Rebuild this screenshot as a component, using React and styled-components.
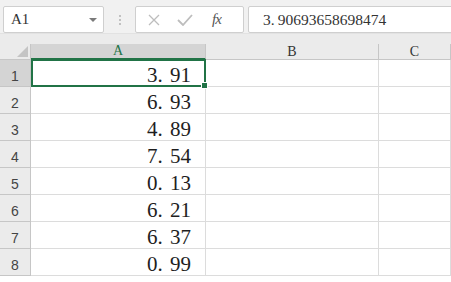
import styled, { createGlobalStyle, css } from "styled-components";

const GlobalStyle = createGlobalStyle`
  html, body {
    margin: 0;
    padding: 0;
    background: #ffffff;
    overflow: hidden;
  }
  * {
    box-sizing: border-box;
  }
`;

const SERIF = `"Liberation Serif", "Times New Roman", serif`;

const Page = styled.div`
  width: 451px;
  height: 282px;
  overflow: hidden;
  font-family: ${SERIF};
  color: #222222;
`;

const Toolbar = styled.div`
  height: 34px;
  padding: 6px 0 0 3px;
  background: #f1f1f1;
  display: flex;
  align-items: flex-start;
  border-bottom: 1px solid #e2e2e2;
`;

const Box = styled.div`
  height: 27px;
  background: #ffffff;
  border: 1px solid #cfcfcf;
  border-radius: 2px;
  display: flex;
  align-items: center;
`;

const NameBox = styled(Box)`
  width: 101px;
  padding: 0 6px 0 7px;
  justify-content: space-between;
  font-size: 15px;
  color: #333333;
`;

const DropArrow = styled.span`
  width: 0;
  height: 0;
  border-left: 4px solid transparent;
  border-right: 4px solid transparent;
  border-top: 4px solid #7a7a7a;
  margin-top: 1px;
`;

const Grip = styled.div`
  width: 31px;
  height: 27px;
  display: flex;
  flex-direction: column;
  align-items: center;
  justify-content: center;
  gap: 2px;
`;

const GripDot = styled.span`
  width: 2px;
  height: 2px;
  border-radius: 50%;
  background: #b0b0b0;
`;

const FuncBox = styled(Box)`
  width: 109px;
  padding: 0 0 0 12px;
  gap: 17px;
`;

const FxLabel = styled.span`
  font-family: ${SERIF};
  font-style: italic;
  font-size: 15px;
  color: #555555;
  letter-spacing: -1px;
  margin-left: 2px;
`;

const FormulaBox = styled(Box)`
  flex: 1;
  margin-left: 4px;
  margin-right: -4px;
  padding-left: 14px;
  font-size: 15.5px;
  color: #333333;
`;

const Strip = styled.div`
  height: 10px;
  background: #ebebeb;
`;

const Grid = styled.div`
  display: grid;
  grid-template-columns: 31px 175px 173px 1fr;
  grid-template-rows: 16px repeat(8, 27px);
`;

const Corner = styled.div`
  background: #ebebeb;
  border-right: 1px solid #c6c6c6;
  border-bottom: 1px solid #c6c6c6;
  display: flex;
  align-items: flex-end;
  justify-content: flex-end;
  padding: 0 2px 2px 0;
`;

const ColHeader = styled.div`
  background: ${(p) => (p.$active ? "#d4d4d4" : "#ebebeb")};
  border-right: 1px solid #c6c6c6;
  border-bottom: ${(p) => (p.$active ? "2px solid #217346" : "1px solid #c6c6c6")};
  color: ${(p) => (p.$active ? "#217346" : "#333333")};
  font-size: 14px;
  line-height: 14px;
  display: flex;
  align-items: center;
  justify-content: center;
`;

const RowHeader = styled.div`
  background: ${(p) => (p.$active ? "#d4d4d4" : "#ebebeb")};
  border-right: 1px solid #c6c6c6;
  border-bottom: 1px solid #c6c6c6;
  color: #444444;
  font-family: "Liberation Sans", Arial, sans-serif;
  font-size: 14px;
  line-height: 14px;
  display: flex;
  align-items: flex-end;
  justify-content: center;
  padding-bottom: 3px;
`;

const Cell = styled.div`
  position: relative;
  border-right: 1px solid #dcdcdc;
  border-bottom: 1px solid #dcdcdc;
  display: flex;
  align-items: flex-end;
  justify-content: flex-end;
  padding-right: 14px;
  font-size: 21px;
  line-height: 22px;
  color: #1e1e1e;
  ${(p) =>
    p.$selected &&
    css`
      &::after {
        content: "";
        position: absolute;
        top: -1px;
        left: 0;
        right: -1px;
        bottom: -1px;
        border: 2px solid #217346;
        pointer-events: none;
      }
    `}
`;

const FillHandle = styled.span`
  position: absolute;
  right: -3px;
  bottom: -3px;
  width: 5px;
  height: 5px;
  background: #217346;
  border: 1px solid #ffffff;
  box-sizing: content-box;
  z-index: 2;
`;

const Dot = styled.span`
  padding-right: ${(p) => p.$gap};
`;

const values = [3.91, 6.93, 4.89, 7.54, 0.13, 6.21, 6.37, 0.99];

function Num({ value, gap = "0.35em" }) {
  const [a, b] = String(value).split(".");
  return (
    <span>
      {a}
      <Dot $gap={gap}>.</Dot>
      {b}
    </span>
  );
}

function Row({ index, value }) {
  const selected = index === 0;
  return (
    <>
      <RowHeader $active={selected}>{index + 1}</RowHeader>
      <Cell $selected={selected}>
        <Num value={value} />
        {selected && <FillHandle />}
      </Cell>
      <Cell />
      <Cell />
    </>
  );
}

function Sheet() {
  return (
    <Grid>
      <Corner>
        <svg width="11" height="11" viewBox="0 0 11 11">
          <path d="M11 0 L11 11 L0 11 Z" fill="#c4c4c4" />
        </svg>
      </Corner>
      <ColHeader $active>A</ColHeader>
      <ColHeader>B</ColHeader>
      <ColHeader>C</ColHeader>
      {values.map((v, i) => (
        <Row key={i} index={i} value={v} />
      ))}
    </Grid>
  );
}

export default function App() {
  return (
    <>
      <GlobalStyle />
      <Page>
        <Toolbar>
          <NameBox>
            <span>A1</span>
            <DropArrow />
          </NameBox>
          <Grip>
            <GripDot />
            <GripDot />
            <GripDot />
          </Grip>
          <FuncBox>
            <svg width="12" height="12" viewBox="0 0 12 12">
              <path d="M1 1 L11 11 M11 1 L1 11" stroke="#bdbdbd" strokeWidth="1.3" fill="none" />
            </svg>
            <svg width="16" height="12" viewBox="0 0 16 12">
              <path d="M1 6 L6 11 L15 1" stroke="#bdbdbd" strokeWidth="1.8" fill="none" />
            </svg>
            <FxLabel>fx</FxLabel>
          </FuncBox>
          <FormulaBox>
            <Num value="3.90693658698474" gap="0.2em" />
          </FormulaBox>
        </Toolbar>
        <Strip />
        <Sheet />
      </Page>
    </>
  );
}
